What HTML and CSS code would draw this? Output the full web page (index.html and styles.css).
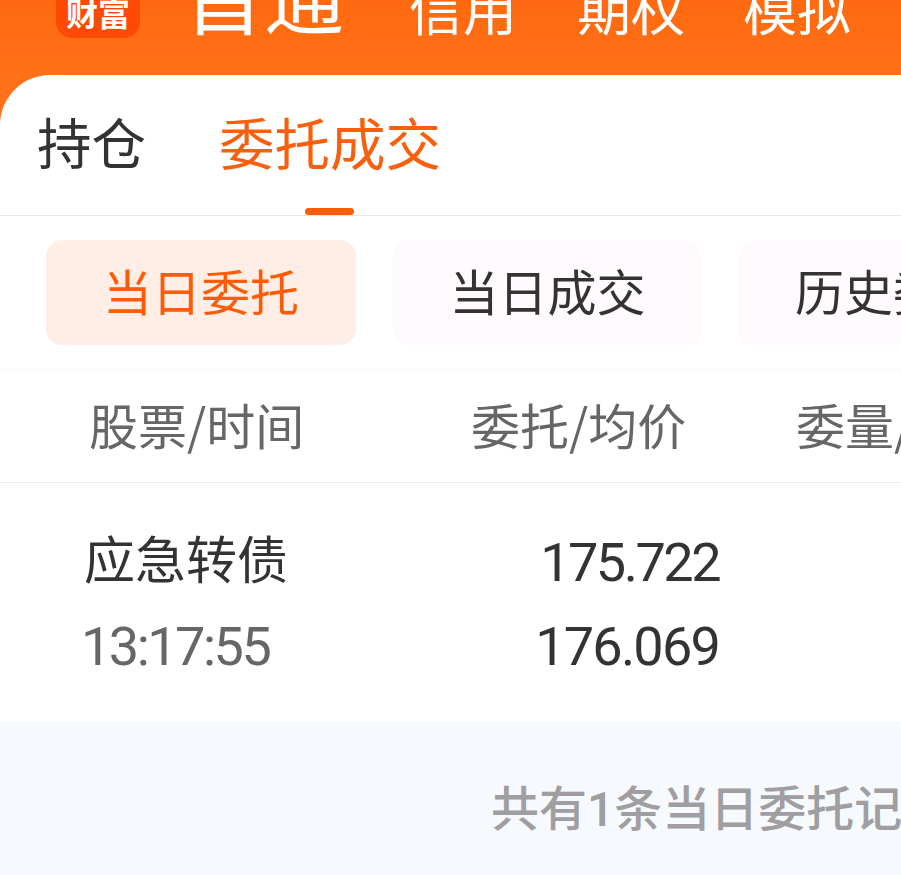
FILE: index.html
```html
<!DOCTYPE html>
<html lang="zh-CN">
<head>
    <meta charset="UTF-8">
    <meta name="viewport" content="width=device-width, initial-scale=1.0">
    <title>委托成交</title>
    <link rel="stylesheet" href="styles.css">
</head>
<body>
    <!-- 顶部导航 -->
    <div class="top-nav">
        <div class="badge">财富</div>
        <div class="nav-item nav-main">首通</div>
        <div class="nav-item nav-credit">信用</div>
        <div class="nav-item nav-option">期权</div>
        <div class="nav-item nav-sim">模拟</div>
    </div>
    <div class="panel">
        <div class="tabs">
            <div class="tab">持仓</div>
            <div class="tab tab-active">委托成交</div>
        </div>
        <div class="chips">
            <div class="chip chip-active">当日委托</div>
            <div class="chip">当日成交</div>
            <div class="chip">历史委托</div>
        </div>
        <div class="table-head">
            <div class="col-name">股票/时间</div>
            <div class="col-price">委托/均价</div>
            <div class="col-qty">委量/成交</div>
        </div>
        <div class="table-row">
            <div class="row-name">
                <div class="stock">应急转债</div>
                <div class="time">13:17:55</div>
            </div>
            <div class="row-price">
                <div>175.722</div>
                <div class="avg">176.069</div>
            </div>
        </div>
    </div>
    <div class="footer">
        <div class="footer-text">共有1条当日委托记录</div>
    </div>
</body>
</html>
```

FILE: styles.css
```css
html, body {
    margin: 0;
    padding: 0;
}
body {
    width: 901px;
    height: 875px;
    overflow: hidden;
    font-family: "Noto Sans CJK SC", "Liberation Sans", sans-serif;
    background: #f6f9fe;
}
.top-nav {
    height: 125px;
    box-sizing: border-box;
    padding: 0 0 50px 56px;
    margin-bottom: -50px;
    display: flex;
    align-items: flex-end;
    overflow: hidden;
    background: linear-gradient(180deg, #ff6a10 0%, #ff7017 60%, #ff7017 100%);
    color: #fff;
    white-space: nowrap;
}
.badge {
    flex: none;
    width: 84px;
    height: 48px;
    margin-bottom: 37px;
    border-radius: 0 0 16px 16px;
    background: #ff4a05;
    font-size: 32px;
    font-weight: 700;
    line-height: 44px;
    text-align: center;
}
.nav-item {
    flex: none;
    font-size: 54px;
    line-height: 60px;
    margin-bottom: 37px;
}
.nav-main {
    margin-left: 44px;
    font-size: 80px;
    line-height: 80px;
    margin-bottom: 42px;
}
.nav-credit { margin-left: 65px; }
.nav-option { margin-left: 60px; }
.nav-sim { margin-left: 58px; }
.panel {
    position: relative;
    background: #fff;
    border-radius: 50px 0 0 0;
    height: 646px;
    overflow: hidden;
}
.tabs {
    height: 141px;
    box-sizing: border-box;
    border-bottom: 1px solid #e6e6e8;
    display: flex;
    padding-left: 37px;
    gap: 73px;
    font-size: 54.5px;
    color: #333;
}
.tab {
    position: relative;
    line-height: 132px;
}
.tab-active {
    color: #f95f0d;
    font-size: 55.5px;
}
.tab-active::after {
    content: "";
    position: absolute;
    left: 86px;
    bottom: 0;
    width: 49px;
    height: 7px;
    border-radius: 4px;
    background: #fb5c08;
}
.chips {
    display: flex;
    gap: 36px;
    padding: 24px 0 24px 46px;
    height: 105px;
    border-bottom: 1px solid #f8f8f8;
}
.chip {
    flex: none;
    width: 310px;
    height: 105px;
    border-radius: 16px;
    background: #fefafe;
    color: #333;
    font-size: 49px;
    line-height: 100px;
    text-align: center;
}
.chip-active {
    background: #ffeee6;
    color: #fb5c08;
}
.chip-active + .chip {
    margin-left: 1px;
    width: 309px;
}
.table-head {
    height: 112px;
    border-bottom: 1px solid #eeeeee;
    display: grid;
    grid-template-columns: 471px 325px auto;
    font-size: 49px;
    line-height: 108px;
    color: #666;
    white-space: nowrap;
}
.col-name { padding-left: 89px; }
.table-row {
    height: 238px;
    display: grid;
    grid-template-columns: 420px 299px;
    box-sizing: border-box;
    padding-top: 38px;
}
.row-name { padding-left: 84px; }
.stock {
    font-size: 51px;
    line-height: 84px;
    color: #333;
    margin-top: -6px;
    margin-bottom: 6px;
}
.time {
    font-family: Roboto, sans-serif;
    font-size: 54px;
    line-height: 84px;
    color: #666;
    letter-spacing: -2.5px;
    margin-left: -3px;
}
.row-price {
    font-family: Roboto, sans-serif;
    font-size: 54px;
    line-height: 84px;
    color: #333;
    text-align: right;
    letter-spacing: -2.5px;
}
.row-price .avg {
    letter-spacing: -1.8px;
}
.footer {
    padding: 57px 0 0 491px;
    white-space: nowrap;
    overflow: hidden;
}
.footer-text {
    font-family: Roboto, "Noto Sans CJK SC", sans-serif;
    font-size: 48px;
    font-weight: 500;
    line-height: 64px;
    color: #a09ea0;
}
```
